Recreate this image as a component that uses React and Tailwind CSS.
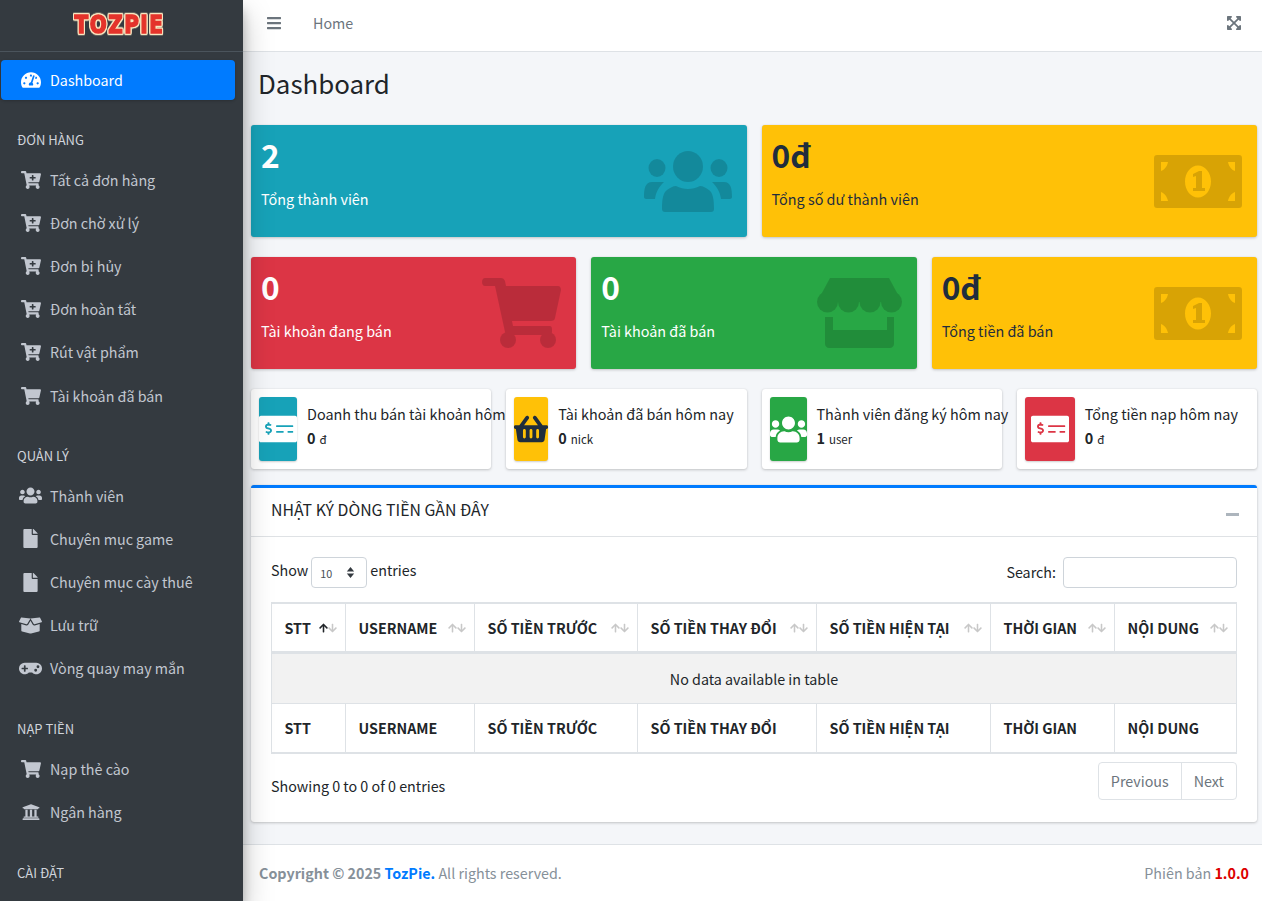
import {
  FaBars,
  FaExpandArrowsAlt,
  FaTachometerAlt,
  FaCartPlus,
  FaShoppingCart,
  FaUsers,
  FaFile,
  FaBoxOpen,
  FaGamepad,
  FaUniversity,
  FaMoneyCheckAlt,
  FaShoppingBasket,
  FaArrowUp,
  FaArrowDown,
} from "react-icons/fa";

const FONT = "[font-family:'Noto_Sans_CJK_JP','Noto_Sans',sans-serif]";

const menu = [
  {
    title: "ĐƠN HÀNG",
    items: [
      [FaCartPlus, "Tất cả đơn hàng", "w-[20px] h-[20px]"],
      [FaCartPlus, "Đơn chờ xử lý", "w-[20px] h-[20px]"],
      [FaCartPlus, "Đơn bị hủy", "w-[20px] h-[20px]"],
      [FaCartPlus, "Đơn hoàn tất", "w-[20px] h-[20px]"],
      [FaCartPlus, "Rút vật phẩm", "w-[20px] h-[20px]"],
      [FaShoppingCart, "Tài khoản đã bán", "w-[20px] h-[20px]"],
    ],
  },
  {
    title: "QUẢN LÝ",
    items: [
      [FaUsers, "Thành viên", "w-[23px] h-[23px]"],
      [FaFile, "Chuyên mục game", "w-[19px] h-[19px]"],
      [FaFile, "Chuyên mục cày thuê", "w-[19px] h-[19px]"],
      [FaBoxOpen, "Lưu trữ", "w-[23px] h-[23px]"],
      [FaGamepad, "Vòng quay may mắn", "w-[23px] h-[23px]"],
    ],
  },
  {
    title: "NẠP TIỀN",
    items: [
      [FaShoppingCart, "Nạp thẻ cào", "w-[20px] h-[20px]"],
      [FaUniversity, "Ngân hàng", "w-[18px] h-[18px]"],
    ],
  },
];

const columns = [
  ["STT", "w-[74px]"],
  ["USERNAME", "w-[129px]"],
  ["SỐ TIỀN TRƯỚC", "w-[163px]"],
  ["SỐ TIỀN THAY ĐỔI", "w-[179px]"],
  ["SỐ TIỀN HIỆN TẠI", "w-[174px]"],
  ["THỜI GIAN", "w-[124px]"],
  ["NỘI DUNG", "flex-1"],
];

const PeopleIcon = () => (
  <svg viewBox="0 0 88 61" className="w-[88px] h-[61px] fill-black opacity-15">
    <ellipse cx="44" cy="15.5" rx="15" ry="15.5" />
    <path d="M18 58c0-10 1-16 5-19 3-2 6-4 9-4 4 2 8 3 12 3s8-1 12-3c3 0 6 2 9 4 4 3 5 9 5 19 0 2-1 3-3 3H21c-2 0-3-1-3-3z" />
    <ellipse cx="13" cy="17" rx="8.5" ry="9" />
    <ellipse cx="75" cy="17" rx="8.5" ry="9" />
    <path d="M0 46c0-8 1-15 8-15h12c-4 4-8 9-9 17H2c-1 0-2-1-2-2zM88 46c0-8-1-15-8-15H68c4 4 8 9 9 17h9c1 0 2-1 2-2z" />
  </svg>
);

const MoneyIcon = () => (
  <svg viewBox="0 0 88 53" className="w-[88px] h-[53px] fill-black opacity-15">
    <path
      fillRule="evenodd"
      d="M3 0h82a3 3 0 0 1 3 3v47a3 3 0 0 1-3 3H3a3 3 0 0 1-3-3V3a3 3 0 0 1 3-3zM7 7v9c3-1 6-4 7-9H7zm74 0h-7c1 5 4 8 7 9V7zM7 46h7c-1-5-4-8-7-9v9zm74 0v-9c-3 1-6 4-7 9h7zM44 10.500c-7 0-13 7-13 16s6 16 13 16 13-7 13-16-6-16-13-16z"
    />
    <path d="M39 36v-3h3V21l-3 1v-3l6-3h3v17h3v3z" />
  </svg>
);

const CartIcon = () => (
  <svg viewBox="0 0 79 70" className="w-[79px] h-[70px] fill-black opacity-15">
    <path d="M3 0h16c2 0 3 1 4 3l1 5h52c2 0 3 2 3 4l-6 28c0 2-2 3-4 3H30l1 5h37c1 0 2 1 2 3v3c0 2-1 3-2 3H26c-2 0-3-1-3-3L13 8H3C1 8 0 6 0 4s1-4 3-4z" />
    <circle cx="26" cy="62" r="8" />
    <circle cx="66" cy="62" r="8" />
  </svg>
);

const StoreIcon = () => (
  <svg viewBox="0 0 85 70" className="w-[85px] h-[70px] fill-black opacity-15">
    <path d="M13 0h59l13 24H0z" />
    <circle cx="10.500" cy="24" r="10.500" />
    <circle cx="31.500" cy="24" r="10.500" />
    <circle cx="53" cy="24" r="10.500" />
    <circle cx="74.500" cy="24" r="10.500" />
    <path d="M8 39h8v13h54V39h7v27c0 2-2 4-4 4H12c-2 0-4-2-4-4z" />
  </svg>
);

const StatCard = ({ value, label, color, dark, icon }) => (
  <div
    className={`${color} flex-1 h-[112px] rounded-[3px] shadow-[0_0_1px_rgba(0,0,0,.125),0_1px_3px_rgba(0,0,0,.2)] p-[10px] relative ${
      dark ? "text-[#1f2d3d]" : "text-white"
    }`}
  >
    <div className="text-[31.7px] leading-[42px] font-bold -mt-[2px]">{value}</div>
    <div className="text-[14.4px] leading-[24px] mt-[12px]">{label}</div>
    <div className="absolute right-[15px] top-0 bottom-0 flex items-center">{icon}</div>
  </div>
);

const InfoBox = ({ Icon, color, iconColor, iconW, text, value, unit, iconSize }) => (
  <div className="flex-1 w-0 h-[80px] bg-white rounded-[3px] shadow-[0_0_1px_rgba(0,0,0,.125),0_1px_3px_rgba(0,0,0,.2)] p-2 flex">
    <div
      className={`${color} ${iconColor} ${iconW} rounded-[3px] shadow-[0_1px_2px_rgba(0,0,0,.2)] flex items-center justify-center shrink-0`}
    >
      <Icon className={`${iconSize} shrink-0`} />
    </div>
    <div className="pl-[10px] flex flex-col justify-center whitespace-nowrap min-w-0 pb-[5px]">
      <div className="text-[14.4px] leading-[24px] text-[#212529]">{text}</div>
      <div className="text-[11.5px] leading-[24px] text-[#212529]">
        <span className="text-[14.4px] font-bold">{value}</span>
        <span className="ml-[4px]">{unit}</span>
      </div>
    </div>
  </div>
);

const App = () => {
  return (
    <div className={`${FONT} w-full h-[901px] overflow-hidden flex bg-[#f4f6f9] text-[#212529] text-[14.3px] leading-[22px]`}>
      {/* sidebar */}
      <aside className="relative z-10 w-[243px] shrink-0 bg-[#343a40] shadow-[0_14px_28px_rgba(0,0,0,.25),0_10px_10px_rgba(0,0,0,.22)] flex flex-col overflow-hidden">
        <div className="h-[52px] shrink-0 border-b border-[#4b545c] flex items-start justify-center pt-[9px] pr-[4px]">
          <span className="inline-block scale-y-[1.25] [font-family:'DejaVu_Sans',sans-serif] font-bold text-[20px] leading-[30px] tracking-[1.5px] text-[#e4332b] [-webkit-text-stroke:1.2px_#e4332b] [filter:drop-shadow(1px_0_0_#f8e6c0)_drop-shadow(-1px_0_0_#f8e6c0)_drop-shadow(0_1px_0_#f8e6c0)_drop-shadow(0_-1px_0_#f8e6c0)]">
            TOZPIE
          </span>
        </div>
        <nav className="pt-2 pl-[1px] pr-2">
          <div className="h-[40px] rounded-[4px] bg-[#007bff] text-white flex items-center pl-[19px] shadow-[0_1px_3px_rgba(0,0,0,.2)]">
            <FaTachometerAlt className="w-[20px] h-[20px] shrink-0 ml-[1px]" />
            <span className="ml-[9px]">Dashboard</span>
          </div>
          <div className="pt-[1px]">
            {menu.map((group) => (
              <div key={group.title}>
                <div className="pl-[16px] pt-[28px] pb-[7px] text-[13px] leading-[22px] text-[#d0d4db]">
                  {group.title}
                </div>
                {group.items.map(([Icon, label, size]) => (
                  <div key={label} className="h-[43.2px] flex items-center pl-[19px] text-[#c2c7d0]">
                    <span className="w-[21px] flex justify-center shrink-0">
                      <Icon className={`${size} shrink-0`} />
                    </span>
                    <span className="ml-[9px]">{label}</span>
                  </div>
                ))}
              </div>
            ))}
            <div className="pl-[16px] pt-[29px] text-[13px] leading-[22px] text-[#d0d4db]">CÀI ĐẶT</div>
          </div>
        </nav>
      </aside>

      <div className="flex-1 min-w-0 flex flex-col">
        {/* top bar */}
        <header className="h-[52px] shrink-0 bg-white border-b border-[#dee2e6] flex items-center pl-[24px] pr-[20px] pb-[5px] text-[#6c757d]">
          <FaBars className="w-[14px] h-[16px]" />
          <span className="ml-[32px]">Home</span>
          <FaExpandArrowsAlt className="ml-auto w-[16px] h-[16px]" />
        </header>

        <main className="flex-1 min-h-0 pl-2 pr-[5px]">
          <h1 className="pl-[7px] pt-[12px] h-[73px] text-[25.9px] leading-[37px]">Dashboard</h1>

          <div className="flex gap-[15px]">
            <StatCard value="2" label="Tổng thành viên" color="bg-[#17a2b8]" icon={<PeopleIcon />} />
            <StatCard value="0đ" label="Tổng số dư thành viên" color="bg-[#ffc107]" dark icon={<MoneyIcon />} />
          </div>

          <div className="flex gap-[15px] mt-[20px]">
            <StatCard value="0" label="Tài khoản đang bán" color="bg-[#dc3545]" icon={<CartIcon />} />
            <StatCard value="0" label="Tài khoản đã bán" color="bg-[#28a745]" icon={<StoreIcon />} />
            <StatCard value="0đ" label="Tổng tiền đã bán" color="bg-[#ffc107]" dark icon={<MoneyIcon />} />
          </div>

          <div className="flex gap-[15px] mt-[20px]">
            <InfoBox
              Icon={FaMoneyCheckAlt}
              color="bg-[#17a2b8]"
              iconColor="text-white"
              iconW="w-[38px]"
              iconSize="w-[38px] h-[38px]"
              text="Doanh thu bán tài khoản hôm"
              value="0"
              unit="đ"
            />
            <InfoBox
              Icon={FaShoppingBasket}
              color="bg-[#ffc107]"
              iconColor="text-[#1f2d3d]"
              iconW="w-[34px]"
              iconSize="w-[34px] h-[34px]"
              text="Tài khoản đã bán hôm nay"
              value="0"
              unit="nick"
            />
            <InfoBox
              Icon={FaUsers}
              color="bg-[#28a745]"
              iconColor="text-white"
              iconW="w-[37px]"
              iconSize="w-[37px] h-[37px]"
              text="Thành viên đăng ký hôm nay"
              value="1"
              unit="user"
            />
            <InfoBox
              Icon={FaMoneyCheckAlt}
              color="bg-[#dc3545]"
              iconColor="text-white"
              iconW="w-[50px]"
              iconSize="w-[38px] h-[38px]"
              text="Tổng tiền nạp hôm nay"
              value="0"
              unit="đ"
            />
          </div>

          {/* cash flow log */}
          <section className="mt-[16px] h-[337px] bg-white rounded-[3px] border-t-[3px] border-[#007bff] shadow-[0_0_1px_rgba(0,0,0,.125),0_1px_3px_rgba(0,0,0,.2)]">
            <div className="h-[49px] border-b border-[#dfe2e5] flex items-center justify-between pl-[20px] pr-[18px] pb-[4px]">
              <span className="text-[15.84px]">NHẬT KÝ DÒNG TIỀN GẦN ĐÂY</span>
              <span className="w-[13px] h-[3px] mt-[8px] bg-[#adb5bd]" />
            </div>
            <div className="px-[20px] pt-[20px]">
              <div className="flex items-center justify-between h-[31px]">
                <div className="flex items-center pb-[5px]">
                  Show
                  <span className="mx-[3px] mt-[5px] w-[56px] h-[31px] border border-[#ced4da] rounded-[4px] text-[10.8px] text-[#495057] flex items-center justify-between pl-[8px] pr-[11px]">
                    10
                    <svg viewBox="0 0 8 12" className="w-[9px] h-[11px] fill-[#343a40]">
                      <path d="M4 0l4 5H0zM4 12L0 7h8z" />
                    </svg>
                  </span>
                  entries
                </div>
                <div className="flex items-center">
                  <span className="pb-[2px]">Search:</span>
                  <span className="ml-[7px] w-[174px] h-[31px] border border-[#ced4da] rounded-[4px]" />
                </div>
              </div>

              <div className="mt-[14px] border-x border-b-2 border-[#dee2e6]">
                <div className="flex h-[52px] border-t-2 border-b-[3px] border-[#dee2e6]">
                  {columns.map(([name, width], i) => (
                    <div
                      key={name}
                      className={`${width} ${i < 6 ? "border-r" : ""} border-[#dee2e6] pl-[12.5px] pr-[8px] flex items-center justify-between font-bold whitespace-nowrap`}
                    >
                      {name}
                      <span className="flex">
                        <FaArrowUp className={`w-[9px] h-[10px] ${i === 0 ? "text-[#212529]" : "text-[#c8c8c8]"}`} />
                        <FaArrowDown className="w-[9px] h-[10px] text-[#c8c8c8]" />
                      </span>
                    </div>
                  ))}
                </div>
                <div className="h-[49px] bg-[#f2f2f2] flex items-center justify-center">
                  No data available in table
                </div>
                <div className="flex h-[49px] border-t border-[#dee2e6]">
                  {columns.map(([name, width], i) => (
                    <div
                      key={name}
                      className={`${width} ${i < 6 ? "border-r" : ""} border-[#dee2e6] pl-[12.5px] flex items-center font-bold whitespace-nowrap`}
                    >
                      {name}
                    </div>
                  ))}
                </div>
              </div>

              <div className="flex items-start justify-between mt-[8px]">
                <span className="mt-[13px]">Showing 0 to 0 of 0 entries</span>
                <div className="flex h-[38px] border border-[#dee2e6] rounded-[4px] text-[#6c757d]">
                  <span className="px-[12px] flex items-center border-r border-[#dee2e6]">Previous</span>
                  <span className="px-[12px] flex items-center">Next</span>
                </div>
              </div>
            </div>
          </section>
        </main>

        <footer className="h-[57px] shrink-0 bg-white border-t border-[#dee2e6] flex items-center justify-between pl-[16px] pr-[13px] text-[#869099]">
          <span>
            <b>Copyright © 2025 <span className="text-[#007bff]">TozPie.</span></b> All rights reserved.
          </span>
          <span>
            Phiên bản <b className="text-[#dc0000]">1.0.0</b>
          </span>
        </footer>
      </div>
    </div>
  );
};

export default App;
